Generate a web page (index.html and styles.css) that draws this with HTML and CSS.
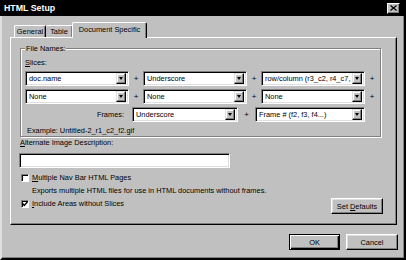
FILE: index.html
```html
<!DOCTYPE html>
<html lang="en">
<head>
    <meta charset="UTF-8">
    <title>HTML Setup</title>
    <link rel="stylesheet" href="styles.css">
</head>
<body>
    <div class="window">
        <div class="titlebar">
            <span class="title">HTML Setup</span>
            <span class="close">
                <svg width="7" height="6" viewBox="0 0 7 6"><path d="M0.5 0.5L6.5 5.5M6.5 0.5L0.5 5.5" stroke="#000" stroke-width="1.3"/></svg>
            </span>
        </div>
        <div class="frame">
            <div class="tabs">
                <div class="tab tab-general">General</div>
                <div class="tab tab-table">Table</div>
                <div class="tab active">Document Specific</div>
            </div>
            <div class="panel">
                <div class="group">
                    <div class="legend">File Names:</div>
                    <div class="label"><u>S</u>lices:</div>
                    <div class="row">
                        <div class="select"><span>doc.name</span><i class="drop"></i></div>
                        <span class="plus">+</span>
                        <div class="select"><span>Underscore</span><i class="drop"></i></div>
                        <span class="plus">+</span>
                        <div class="select"><span>row/column (r3_c2, r4_c7, ...)</span><i class="drop"></i></div>
                        <span class="plus">+</span>
                    </div>
                    <div class="row">
                        <div class="select"><span>None</span><i class="drop"></i></div>
                        <span class="plus">+</span>
                        <div class="select"><span>None</span><i class="drop"></i></div>
                        <span class="plus">+</span>
                        <div class="select"><span>None</span><i class="drop"></i></div>
                        <span class="plus">+</span>
                    </div>
                    <div class="row">
                        <span class="frames-label">Frames:</span>
                        <div class="select select-mid"><span>Underscore</span><i class="drop"></i></div>
                        <span class="plus plus-wide">+</span>
                        <div class="select select-wide"><span>Frame # (f2, f3, f4...)</span><i class="drop"></i></div>
                    </div>
                    <div class="example">Example: Untitled-2_r1_c2_f2.gif</div>
                </div>

                <div class="alt-label"><u>A</u>lternate Image Description:</div>
                <div class="textbox"></div>

                <div class="option">
                    <span class="check"></span>
                    <span><u>M</u>ultiple Nav Bar HTML Pages</span>
                </div>
                <div class="hint">Exports multiple HTML files for use in HTML documents without frames.</div>
                <div class="last-row">
                    <div class="option option-last">
                        <span class="check">
                            <svg width="6" height="6" viewBox="0 0 6 6"><path d="M0.5 2.5L2.3 4.5L5.5 0.8" fill="none" stroke="#000" stroke-width="1.4"/></svg>
                        </span>
                        <span><u>I</u>nclude Areas without Slices</span>
                    </div>
                    <div class="btn btn-defaults"><span>Set <u>D</u>efaults</span></div>
                </div>
            </div>
            <div class="footer">
                <div class="btn btn-ok default"><span>OK</span></div>
                <div class="btn btn-cancel"><span>Cancel</span></div>
            </div>
        </div>
    </div>
</body>
</html>
```

FILE: styles.css
```css
* { box-sizing: border-box; }
body { margin: 0; font-family: "Liberation Sans", Arial, sans-serif; font-size: 7.4px; color: #000; background: #c0c0c0; }
u { text-decoration: underline; text-underline-offset: 1px; }

.window { width: 406px; height: 260px; display: flex; flex-direction: column; background: #c0c0c0; overflow: hidden; }
.titlebar { height: 16px; background: #000; color: #fff; display: flex; align-items: center; justify-content: space-between; padding: 0 6px 0 4px; }
.title { font-size: 8.8px; font-weight: bold; }
.close { width: 13px; height: 11px; background: #c0c0c0; border: 1px solid; border-color: #fff #000 #000 #fff; box-shadow: inset -1px -1px #808080; display: flex; align-items: center; justify-content: center; }

.frame { flex: 1; border-left: 2px solid #dfdfdf; border-right: 2px solid #000; border-bottom: 2px solid #000; box-shadow: inset -1px -1px #808080; }

.tabs { display: flex; align-items: flex-end; height: 15px; margin-top: 6px; padding-left: 12px; }
.tab { height: 12px; line-height: 11px; text-align: center; border: 1px solid; border-bottom: none; border-color: #fff #000 #000 #fff; border-radius: 2px 2px 0 0; box-shadow: inset -1px 0 #808080; }
.tab-general { width: 32px; }
.tab-table { width: 27px; border-left: none; }
.tab.active { position: relative; z-index: 1; width: 75px; height: 16px; line-height: 14px; margin-left: -1px; margin-bottom: -1px; background: #c0c0c0; }

.panel { width: 387px; height: 188px; margin-left: 8px; border: 1px solid; border-color: #fff #000 #000 #fff; box-shadow: inset -1px -1px #808080; }

.group { width: 361px; height: 89px; margin: 10px 0 0 9px; padding-left: 4px; border: 1px solid #808080; box-shadow: 1px 1px 0 #fff, inset 1px 1px 0 #fff; }
.legend { display: inline-block; margin-top: -5px; line-height: 10px; padding: 0 1px; background: #c0c0c0; vertical-align: top; }
.label { line-height: 10px; }
.row { display: flex; align-items: center; height: 15px; margin-top: 3px; }
.select { width: 104px; height: 15px; display: flex; align-items: center; background: #fff; border: 1px solid; border-color: #808080 #fff #fff #808080; box-shadow: inset 1px 1px #000, inset -1px -1px #dfdfdf; padding: 0 2px 0 3px; }
.select span { flex: 1; overflow: hidden; white-space: nowrap; line-height: 11px; }
.select-mid { width: 106px; }
.select-wide { width: 110px; }
.drop { width: 10px; height: 11px; flex: none; background: #c0c0c0; border: 1px solid; border-color: #dfdfdf #000 #000 #dfdfdf; box-shadow: inset -1px -1px #808080, inset 1px 1px #fff; display: flex; align-items: center; justify-content: center; }
.drop::after { content: ""; border-left: 2.5px solid transparent; border-right: 2.5px solid transparent; border-top: 3px solid #000; }
.plus { width: 14px; text-align: center; font-size: 8px; }
.plus-wide { width: 17px; }
.frames-label { width: 99px; margin-right: 8px; text-align: right; }
.example { margin-top: 4px; line-height: 10px; padding-left: 2px; }

.alt-label { margin: 1px 0 0 9px; line-height: 10px; }
.textbox { width: 211px; height: 15px; margin: 5px 0 0 8px; background: #fff; border: 1px solid; border-color: #808080 #fff #fff #808080; box-shadow: inset 1px 1px #000, inset -1px -1px #dfdfdf; }

.option { display: flex; align-items: center; gap: 3px; margin: 5px 0 0 10px; line-height: 10px; }
.check { width: 8px; height: 8px; background: #fff; border: 1px solid; border-color: #808080 #fff #fff #808080; box-shadow: inset 1px 1px #000; display: flex; align-items: center; justify-content: center; }
.hint { margin: 3px 0 0 21px; line-height: 10px; }
.last-row { display: flex; justify-content: space-between; align-items: flex-start; margin-top: 2px; }
.option-last { margin-top: 1px; }

.btn { height: 16px; display: flex; align-items: center; justify-content: center; background: #c0c0c0; border: 1px solid; border-color: #fff #000 #000 #fff; box-shadow: inset -1px -1px #808080, inset 1px 1px #dfdfdf; }
.btn-defaults { width: 52px; margin-right: 13px; }
.footer { display: flex; justify-content: flex-end; gap: 6px; margin-top: 9px; padding-right: 6px; }
.btn-ok { width: 51px; }
.btn-cancel { width: 52px; }
.btn.default { border-color: #000; box-shadow: inset 1px 1px #fff, inset -1px -1px #000, inset -2px -2px #808080; }
```
